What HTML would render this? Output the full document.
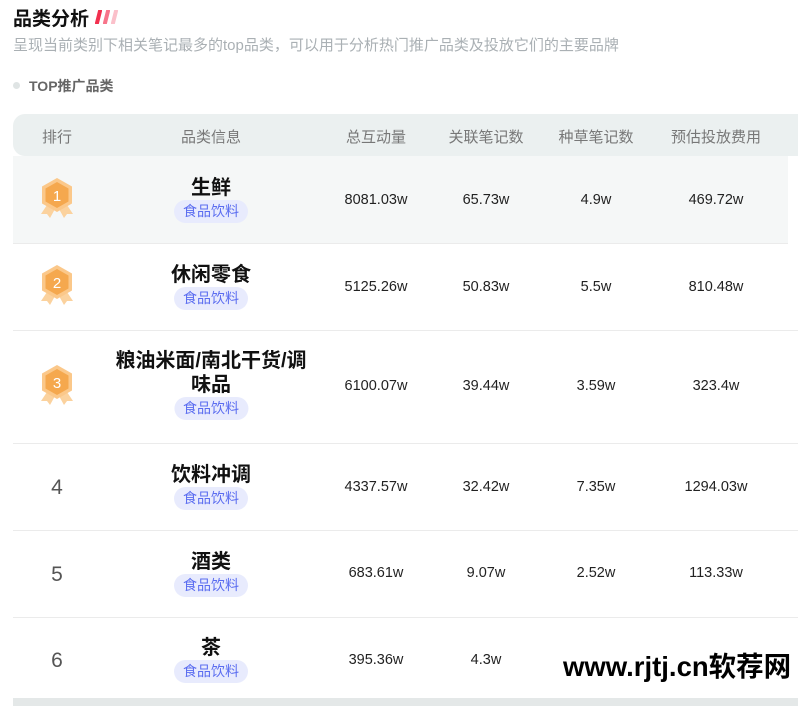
<!DOCTYPE html>
<html><head><meta charset="utf-8"><style>
*{margin:0;padding:0;box-sizing:border-box}
body{width:798px;height:706px;overflow:hidden;background:#fff;font-family:"Liberation Sans","Noto Sans CJK SC",sans-serif;position:relative}
.t{position:absolute;left:13px;top:4px;font-size:19px;font-weight:bold;color:#111}
.sub{position:absolute;left:13px;top:34px;font-size:15px;color:#aab0b4;white-space:nowrap}
.sec{position:absolute;left:29px;top:76px;font-size:14px;color:#666;font-weight:bold}
.dot{position:absolute;left:13px;top:82px;width:7px;height:7px;border-radius:50%;background:#dfe4e4}
.hd{position:absolute;left:13px;top:114px;width:800px;height:42px;background:#ebf0f0;border-radius:12px 0 0 12px;font-size:15px;color:#777}
.c{position:absolute;transform:translateX(-50%);white-space:nowrap;text-align:center}
.row{position:absolute;left:13px;width:800px;border-bottom:1px solid #ebebeb}
.num{font-size:14.5px;color:#222}
.nm{font-size:20px;font-weight:bold;color:#111;line-height:24px}
.tag{display:inline-block;background:#e8ebfd;color:#5a6cf0;font-size:14px;border-radius:13px;padding:1px 9px;line-height:21px}
.rk{font-size:21px;color:#555}
</style></head><body>
<div class="t">品类分析 <svg width="26" height="14" style="vertical-align:1px" viewBox="0 0 26 14"><path d="M3 13L6 1" stroke="#f2304f" stroke-width="4" stroke-linecap="round"/><path d="M11 13L14 1" stroke="#f7748a" stroke-width="4" stroke-linecap="round"/><path d="M19 13L22 1" stroke="#fbc0ca" stroke-width="4" stroke-linecap="round"/></svg></div>
<div class="sub">呈现当前类别下相关笔记最多的top品类，可以用于分析热门推广品类及投放它们的主要品牌</div>
<div class="dot"></div><div class="sec">TOP推广品类</div>
<div class="hd">
<span class="c" style="left:44px;top:12px">排行</span>
<span class="c" style="left:198px;top:12px">品类信息</span>
<span class="c" style="left:363px;top:12px">总互动量</span>
<span class="c" style="left:473px;top:12px">关联笔记数</span>
<span class="c" style="left:583px;top:12px">种草笔记数</span>
<span class="c" style="left:703px;top:12px">预估投放费用</span>
</div>

<div class="row" style="top:156px;height:88px;background:#f5f7f7;width:775px"></div>
<div class="row" style="top:244px;height:87px"></div>
<div class="row" style="top:331px;height:113px"></div>
<div class="row" style="top:444px;height:87px"></div>
<div class="row" style="top:531px;height:87px"></div>
<div style="position:absolute;left:13px;top:698px;width:785px;height:8px;background:#e4e8e8"></div>

<svg style="position:absolute;left:39px;top:177px" width="36" height="42" viewBox="0 0 36 42"><path d="M8 28L2 37h6l3 4 5-9z M28 28l6 9h-6l-3 4-5-9z" fill="#fbd29e"/><path d="M18 1L33 9.5v17L18 35 3 26.5v-17z" fill="#fbc88a"/><path d="M18 5L29.5 11.5v13L18 31 6.5 24.5v-13z" fill="#f5a84e"/><text x="18" y="24" font-size="15" fill="#fff" text-anchor="middle" font-family="Liberation Sans">1</text></svg>
<svg style="position:absolute;left:39px;top:264px" width="36" height="42" viewBox="0 0 36 42"><path d="M8 28L2 37h6l3 4 5-9z M28 28l6 9h-6l-3 4-5-9z" fill="#fbd29e"/><path d="M18 1L33 9.5v17L18 35 3 26.5v-17z" fill="#fbc88a"/><path d="M18 5L29.5 11.5v13L18 31 6.5 24.5v-13z" fill="#f5a84e"/><text x="18" y="24" font-size="15" fill="#fff" text-anchor="middle" font-family="Liberation Sans">2</text></svg>
<svg style="position:absolute;left:39px;top:364px" width="36" height="42" viewBox="0 0 36 42"><path d="M8 28L2 37h6l3 4 5-9z M28 28l6 9h-6l-3 4-5-9z" fill="#fbd29e"/><path d="M18 1L33 9.5v17L18 35 3 26.5v-17z" fill="#fbc88a"/><path d="M18 5L29.5 11.5v13L18 31 6.5 24.5v-13z" fill="#f5a84e"/><text x="18" y="24" font-size="15" fill="#fff" text-anchor="middle" font-family="Liberation Sans">3</text></svg>
<span class="c rk" style="left:57px;top:476px">4</span>
<span class="c rk" style="left:57px;top:563px">5</span>
<span class="c rk" style="left:57px;top:649px">6</span>

<div class="c" style="left:211px;top:176px"><div class="nm">生鲜</div><span class="tag">食品饮料</span></div>
<div class="c" style="left:211px;top:263px"><div class="nm">休闲零食</div><span class="tag">食品饮料</span></div>
<div class="c" style="left:211px;top:349px"><div class="nm">粮油米面/南北干货/调<br>味品</div><span class="tag">食品饮料</span></div>
<div class="c" style="left:211px;top:463px"><div class="nm">饮料冲调</div><span class="tag">食品饮料</span></div>
<div class="c" style="left:211px;top:550px"><div class="nm">酒类</div><span class="tag">食品饮料</span></div>
<div class="c" style="left:211px;top:636px"><div class="nm">茶</div><span class="tag">食品饮料</span></div>

<span class="c num" style="left:376px;top:192px">8081.03w</span><span class="c num" style="left:486px;top:192px">65.73w</span><span class="c num" style="left:596px;top:192px">4.9w</span><span class="c num" style="left:716px;top:192px">469.72w</span>
<span class="c num" style="left:376px;top:279px">5125.26w</span><span class="c num" style="left:486px;top:279px">50.83w</span><span class="c num" style="left:596px;top:279px">5.5w</span><span class="c num" style="left:716px;top:279px">810.48w</span>
<span class="c num" style="left:376px;top:378px">6100.07w</span><span class="c num" style="left:486px;top:378px">39.44w</span><span class="c num" style="left:596px;top:378px">3.59w</span><span class="c num" style="left:716px;top:378px">323.4w</span>
<span class="c num" style="left:376px;top:479px">4337.57w</span><span class="c num" style="left:486px;top:479px">32.42w</span><span class="c num" style="left:596px;top:479px">7.35w</span><span class="c num" style="left:716px;top:479px">1294.03w</span>
<span class="c num" style="left:376px;top:565px">683.61w</span><span class="c num" style="left:486px;top:565px">9.07w</span><span class="c num" style="left:596px;top:565px">2.52w</span><span class="c num" style="left:716px;top:565px">113.33w</span>
<span class="c num" style="left:376px;top:652px">395.36w</span><span class="c num" style="left:486px;top:652px">4.3w</span>
<span style="position:absolute;left:563px;top:644px;font-size:27.5px;font-weight:bold;color:#000;white-space:nowrap">www.rjtj.cn软荐网</span>
</body></html>
